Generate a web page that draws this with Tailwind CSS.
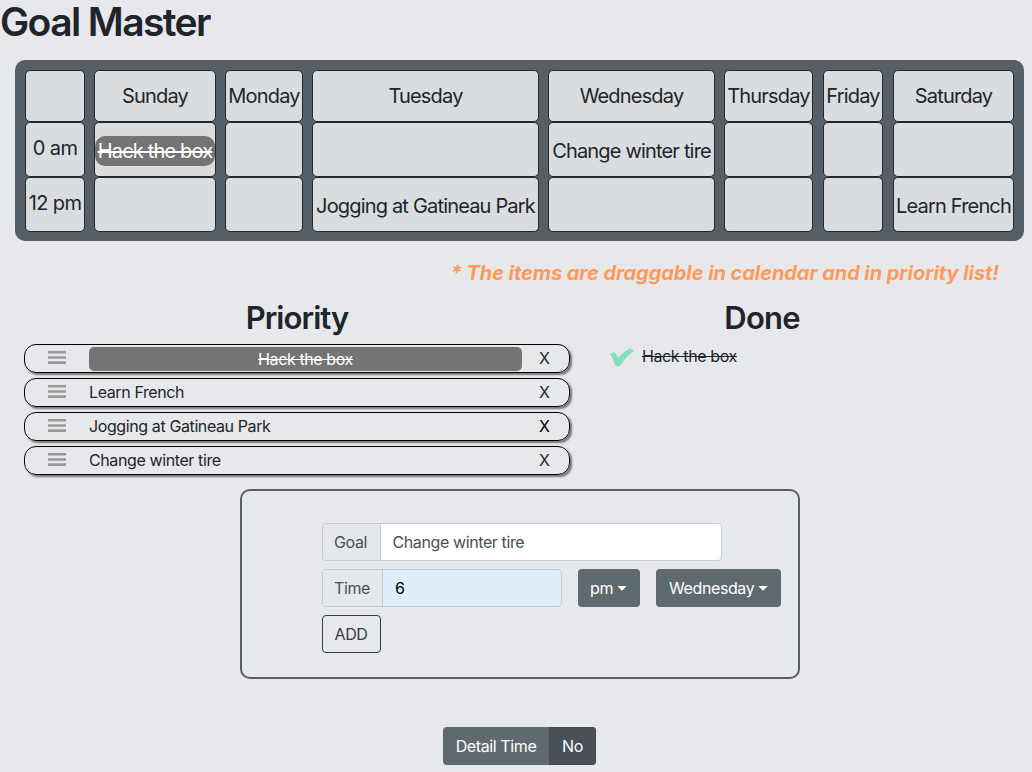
<!DOCTYPE html>
<html lang="en">
<head>
<meta charset="utf-8">
<title>Goal Master</title>
<script src="https://cdn.jsdelivr.net/npm/@tailwindcss/browser@4"></script>
</head>
<body class="h-[772px] w-[1032px] overflow-hidden bg-[#e7e8ec] font-['Inter','Liberation_Sans',sans-serif] text-base leading-6 tracking-[-0.0245em] text-[#212529] whitespace-nowrap">
<h1 class="h-[60px] text-[39px] leading-[43px] font-semibold tracking-[-0.041em]">Goal Master</h1>

<section class="ml-[15px] grid h-[181px] w-[1009px] grid-cols-[60px_122px_78px_227px_167px_90px_61px_121px] grid-rows-[52px_55px_55px] gap-x-[9px] rounded-[10px] bg-[#555f65] p-[10px] text-xl leading-[30px] tracking-[-0.041em] [&>div]:flex [&>div]:items-center [&>div]:justify-center [&>div]:rounded-[5px] [&>div]:border [&>div]:border-[#25282a] [&>div]:bg-[#d9dde0]">
  <div></div><div><span>Sunday</span></div><div><span>Monday</span></div><div><span>Tuesday</span></div><div><span>Wednesday</span></div><div class="mr-px"><span>Thursday</span></div><div class="mr-px"><span>Friday</span></div><div><span>Saturday</span></div>
  <div class="pb-[3px] tracking-[-0.03em]"><span>0 am</span></div><div class="pt-[3px]"><p class="h-[30px] w-full rounded-[10px] bg-[#747474] text-center text-white line-through"><span>Hack the box</span></p></div><div></div><div></div><div class="pt-[3px]"><span>Change winter tire</span></div><div class="mr-px"></div><div class="mr-px"></div><div></div>
  <div class="pb-[3px] tracking-[-0.03em]"><span>12 pm</span></div><div></div><div></div><div class="pt-[3px]"><span>Jogging at Gatineau Park</span></div><div></div><div class="mr-px"></div><div class="mr-px"></div><div class="pt-[3px]"><span>Learn French</span></div>
</section>

<p class="mt-[17px] mr-[33px] text-right text-xl leading-[30px] font-bold tracking-[-0.003em] text-[#ff9b59] italic">* The items are draggable in calendar and in priority list!</p>

<main class="flex h-[201px] pl-6">
  <section class="w-[546px]">
    <h2 class="h-14 pt-[11px] text-center text-[31px] leading-[38px] font-semibold tracking-[-0.03em]">Priority</h2>
    <ul class="flex flex-col gap-[5px] [&>li]:flex [&>li]:h-[29px] [&>li]:rounded-xl [&>li]:border [&>li]:border-black [&>li]:pl-[23px] [&>li]:leading-[26px] [&>li]:shadow-[2px_2px_2px_#777]">
      <li><svg class="mt-[6px] mr-[23px] shrink-0" width="18" height="14" fill="#999"><path d="M0 0h18v2.400H0zM0 5.200h18v2.600H0zM0 10.300h18v2.700H0z"/></svg><p class="mt-0.5 h-6 w-[433px] rounded-[5px] bg-[#747474] text-center leading-6 text-white line-through">Hack the box</p><b class="ml-[17px] font-normal">X</b></li>
      <li><svg class="mt-[6px] mr-[23px] shrink-0" width="18" height="14" fill="#999"><path d="M0 0h18v2.400H0zM0 5.200h18v2.600H0zM0 10.300h18v2.700H0z"/></svg><p class="w-[433px]">Learn French</p><b class="ml-[17px] font-normal">X</b></li>
      <li><svg class="mt-[6px] mr-[23px] shrink-0" width="18" height="14" fill="#999"><path d="M0 0h18v2.400H0zM0 5.200h18v2.600H0zM0 10.300h18v2.700H0z"/></svg><p class="w-[433px]">Jogging at Gatineau Park</p><b class="ml-[17px] font-normal text-black">X</b></li>
      <li><svg class="mt-[6px] mr-[23px] shrink-0" width="18" height="14" fill="#999"><path d="M0 0h18v2.400H0zM0 5.200h18v2.600H0zM0 10.300h18v2.700H0z"/></svg><p class="w-[433px]">Change winter tire</p><b class="ml-[17px] font-normal">X</b></li>
    </ul>
  </section>
  <section class="ml-10 w-[304px]">
    <h2 class="h-14 pt-[11px] text-center text-[31px] leading-[38px] font-semibold tracking-[-0.025em]">Done</h2>
    <div class="flex"><svg class="mt-1 mr-2 shrink-0" width="24" height="18" fill="#84e0b9"><path d="M0 6L4.500 4L8.500 9.800Q13.500 3.500 20 .5L24 2.800Q16 8.500 10 18H5.500Q3.500 11.500 0 6z"/></svg><span class="line-through">Hack the box</span></div>
  </section>
</main>

<form class="ml-[240px] flex h-[190px] w-[560px] flex-col gap-2 rounded-[10px] border-2 border-[#555f65] pt-8 pl-20">
  <div class="flex h-[38px] w-[400px] overflow-hidden rounded border border-[#c4ccd3] bg-white leading-9 text-[#495057]">
    <label class="w-[58px] border-r border-[#c4ccd3] bg-[#e5e8eb] pl-[11px]">Goal</label><p class="pl-[11.500px]">Change winter tire</p>
  </div>
  <div class="flex gap-4 leading-[38px] text-white">
    <div class="flex h-[38px] w-[240px] overflow-hidden rounded border border-[#c4ccd3] bg-[#e1edfb] leading-9 text-[#495057]">
      <label class="w-[60px] border-r border-[#c4ccd3] bg-[#e5e8eb] pl-[11px]">Time</label><p class="pl-3 text-black">6</p>
    </div>
    <button type="button" class="flex h-[38px] w-[62px] items-center rounded bg-[#5f6a70] pl-3">pm<svg class="ml-[4px]" width="10" height="5" fill="white"><path d="M.3 0h9.400L5 4.700z"/></svg></button>
    <button type="button" class="flex h-[38px] w-[125px] items-center rounded bg-[#5f6a70] pl-[13px]">Wednesday<svg class="ml-[4px]" width="10" height="5" fill="white"><path d="M.3 0h9.400L5 4.700z"/></svg></button>
  </div>
  <button type="button" class="h-[38px] w-[59px] rounded border border-[#343a40] pr-px text-[#343a40]">ADD</button>
</form>

<div class="mt-12 ml-[443px] flex h-[38px] w-[153px] overflow-hidden rounded text-center leading-[38px] text-white">
  <span class="w-[106px] bg-[#5f6a70]">Detail Time</span><span class="w-[47px] border border-[#434950] bg-[#495057] leading-9">No</span>
</div>
</body>
</html>
